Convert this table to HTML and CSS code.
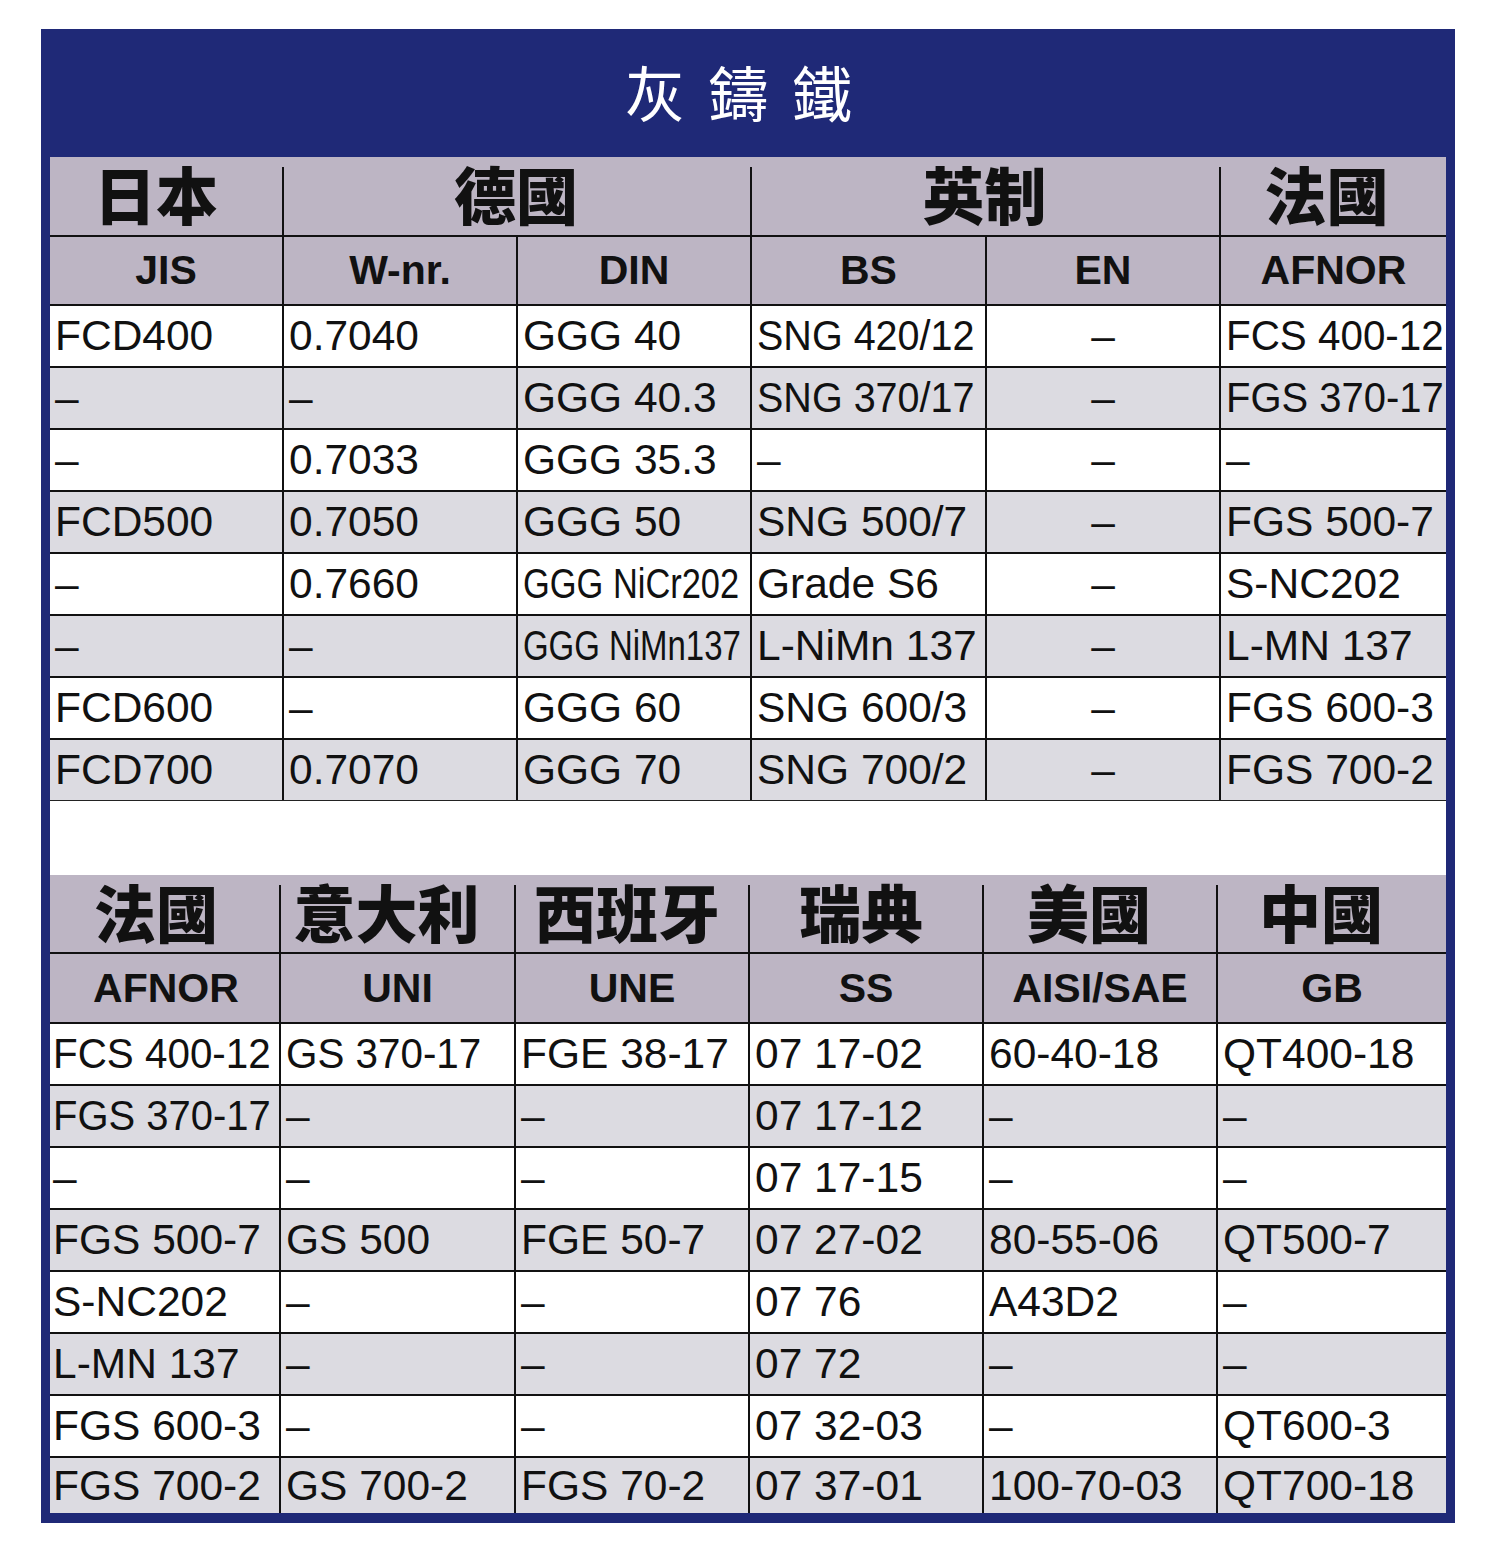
FILE: index.html
```html
<!DOCTYPE html>
<html lang="zh-Hant">
<head>
<meta charset="utf-8">
<title>灰鑄鐵</title>
<link rel="stylesheet" href="styles.css">
</head>
<body>
<div class="frame">
  <div class="title">灰 鑄 鐵</div>

  <div class="tbl top">
    <div class="row head1">
      <div class="c l">日本</div>
      <div class="c span2">德國</div>
      <div class="c span2">英制</div>
      <div class="c l2">法國</div>
    </div>
    <div class="row head2">
      <div class="c">JIS</div>
      <div class="c">W-nr.</div>
      <div class="c">DIN</div>
      <div class="c">BS</div>
      <div class="c">EN</div>
      <div class="c">AFNOR</div>
    </div>
    <div class="row">
      <div class="c">FCD400</div><div class="c">0.7040</div><div class="c">GGG 40</div><div class="c"><span class="sq93">SNG 420/12</span></div><div class="c mid">–</div><div class="c"><span class="sq95">FCS 400-12</span></div>
    </div>
    <div class="row alt">
      <div class="c">–</div><div class="c">–</div><div class="c">GGG 40.3</div><div class="c"><span class="sq93">SNG 370/17</span></div><div class="c mid">–</div><div class="c"><span class="sq94">FGS 370-17</span></div>
    </div>
    <div class="row">
      <div class="c">–</div><div class="c">0.7033</div><div class="c">GGG 35.3</div><div class="c">–</div><div class="c mid">–</div><div class="c">–</div>
    </div>
    <div class="row alt">
      <div class="c">FCD500</div><div class="c">0.7050</div><div class="c">GGG 50</div><div class="c">SNG 500/7</div><div class="c mid">–</div><div class="c">FGS 500-7</div>
    </div>
    <div class="row">
      <div class="c">–</div><div class="c">0.7660</div><div class="c"><span class="sq81">GGG NiCr202</span></div><div class="c">Grade S6</div><div class="c mid">–</div><div class="c">S-NC202</div>
    </div>
    <div class="row alt">
      <div class="c">–</div><div class="c">–</div><div class="c"><span class="sq78">GGG NiMn137</span></div><div class="c">L-NiMn 137</div><div class="c mid">–</div><div class="c">L-MN 137</div>
    </div>
    <div class="row">
      <div class="c">FCD600</div><div class="c">–</div><div class="c">GGG 60</div><div class="c">SNG 600/3</div><div class="c mid">–</div><div class="c">FGS 600-3</div>
    </div>
    <div class="row alt last">
      <div class="c">FCD700</div><div class="c">0.7070</div><div class="c">GGG 70</div><div class="c">SNG 700/2</div><div class="c mid">–</div><div class="c">FGS 700-2</div>
    </div>
  </div>

  <div class="gap"></div>

  <div class="tbl bottom">
    <div class="row head1">
      <div class="c l">法國</div>
      <div class="c l">意大利</div>
      <div class="c l3">西班牙</div>
      <div class="c l3">瑞典</div>
      <div class="c l">美國</div>
      <div class="c l">中國</div>
    </div>
    <div class="row head2">
      <div class="c">AFNOR</div>
      <div class="c">UNI</div>
      <div class="c">UNE</div>
      <div class="c">SS</div>
      <div class="c">AISI/SAE</div>
      <div class="c">GB</div>
    </div>
    <div class="row">
      <div class="c"><span class="sq95">FCS 400-12</span></div><div class="c"><span class="sq95">GS 370-17</span></div><div class="c">FGE 38-17</div><div class="c">07 17-02</div><div class="c">60-40-18</div><div class="c">QT400-18</div>
    </div>
    <div class="row alt">
      <div class="c"><span class="sq94">FGS 370-17</span></div><div class="c">–</div><div class="c">–</div><div class="c">07 17-12</div><div class="c">–</div><div class="c">–</div>
    </div>
    <div class="row">
      <div class="c">–</div><div class="c">–</div><div class="c">–</div><div class="c">07 17-15</div><div class="c">–</div><div class="c">–</div>
    </div>
    <div class="row alt">
      <div class="c">FGS 500-7</div><div class="c">GS 500</div><div class="c">FGE 50-7</div><div class="c">07 27-02</div><div class="c">80-55-06</div><div class="c">QT500-7</div>
    </div>
    <div class="row">
      <div class="c">S-NC202</div><div class="c">–</div><div class="c">–</div><div class="c">07 76</div><div class="c">A43D2</div><div class="c">–</div>
    </div>
    <div class="row alt">
      <div class="c">L-MN 137</div><div class="c">–</div><div class="c">–</div><div class="c">07 72</div><div class="c">–</div><div class="c">–</div>
    </div>
    <div class="row">
      <div class="c">FGS 600-3</div><div class="c">–</div><div class="c">–</div><div class="c">07 32-03</div><div class="c">–</div><div class="c">QT600-3</div>
    </div>
    <div class="row alt end">
      <div class="c">FGS 700-2</div><div class="c">GS 700-2</div><div class="c">FGS 70-2</div><div class="c">07 37-01</div><div class="c">100-70-03</div><div class="c">QT700-18</div>
    </div>
  </div>
</div>
</body>
</html>
```

FILE: styles.css
```css
html, body {
  margin: 0;
  padding: 0;
  background: #ffffff;
}

body {
  font-family: "Liberation Sans", Arial, "Noto Sans CJK TC", sans-serif;
  color: #111111;
}

.frame {
  box-sizing: border-box;
  width: 1414px;
  margin: 29px 0 0 41px;
  padding: 0 9px 10px 9px;
  background: #1f2977;
}

.title {
  box-sizing: border-box;
  height: 128px;
  padding: 0 14px 6px 0;
  display: flex;
  align-items: center;
  justify-content: center;
  color: #ffffff;
  font-family: "Noto Sans CJK TC", "Noto Sans CJK SC", sans-serif;
  font-weight: 400;
  font-size: 60px;
  letter-spacing: 5px;
  white-space: pre;
}

.tbl {
  background: #ffffff;
}

.top {
  --cols: 232px 234px 234px 235px 234px 227px;
  border-bottom: 1px solid #222;
}

.bottom {
  --cols: 229px 235px 234px 234px 234px 230px;
}

.gap {
  height: 74px;
  background: #ffffff;
}

.row {
  display: grid;
  grid-template-columns: var(--cols);
  box-sizing: border-box;
  height: 62px;
  border-top: 2px solid #111;
  background: #ffffff;
}

.row.alt {
  background: #dcdbe1;
}

.row.end {
  height: 57px;
}

.c {
  box-sizing: border-box;
  display: flex;
  align-items: center;
  padding-left: 5px;
  font-size: 42.5px;
  white-space: nowrap;
  overflow: hidden;
  min-width: 0;
}

.row > .c + .c {
  border-left: 2px solid #111;
}

.bottom .row > .c:first-child {
  padding-left: 3px;
}

.c.mid {
  justify-content: center;
  padding-left: 0;
}

.sq93, .sq81, .sq78, .sq95, .sq94 {
  display: inline-block;
  transform-origin: left center;
}
.sq93 { transform: scaleX(0.93); }
.sq95 { transform: scaleX(0.95); }
.sq94 { transform: scaleX(0.94); }
.sq81 { transform: scaleX(0.81); }
.sq78 { transform: scaleX(0.775); }

/* header rows */
.row.head1 {
  height: 78px;
  border-top: 0;
  background: #bdb5c4;
}

.bottom .row.head1 {
  height: 77px;
}

.row.head1 > .c {
  justify-content: center;
  padding: 0 0 6px 0;
  overflow: visible;
  font-family: "Noto Sans CJK TC", "Noto Sans CJK SC", sans-serif;
  font-weight: 900;
  font-size: 62px;
  line-height: 1;
}

.row.head1 > .c.l {
  padding-right: 20px;
}

.row.head1 > .c.l2 {
  padding-right: 12px;
}

.row.head1 > .c.l3 {
  padding-right: 8px;
}

.row.head1 > .c + .c {
  border-left: 0;
  background: linear-gradient(#111, #111) left 10px / 2px calc(100% - 10px) no-repeat;
}

.span2 {
  grid-column: span 2;
}

.row.head2 {
  height: 69px;
  background: #bdb5c4;
}

.bottom .row.head2 {
  height: 70px;
}

.row.head2 > .c {
  justify-content: center;
  padding-left: 0;
  font-weight: 700;
  font-size: 41px;
}
```
